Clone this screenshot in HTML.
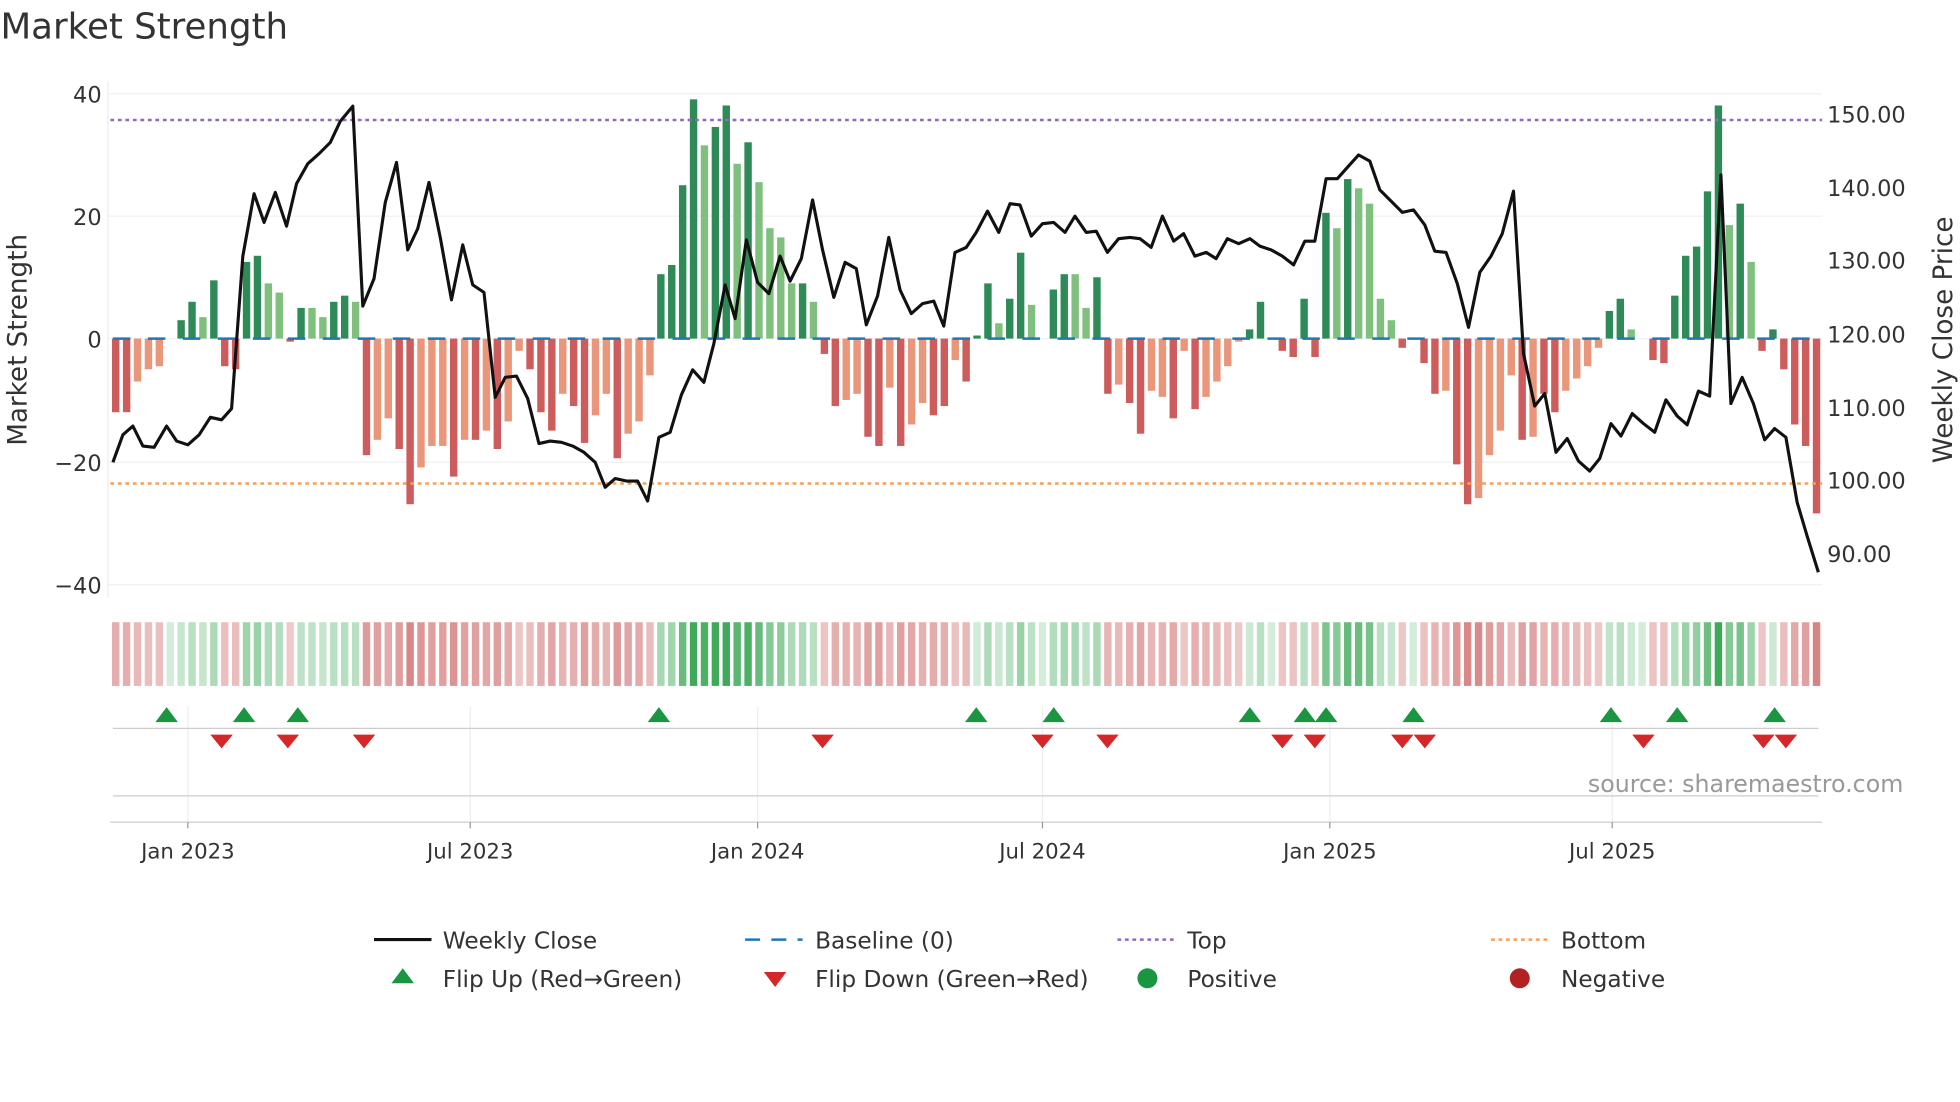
<!DOCTYPE html>
<html><head><meta charset="utf-8"><style>
html,body{margin:0;padding:0;background:#fff;width:1960px;height:1102px;overflow:hidden}
svg{display:block}
text{font-family:"DejaVu Sans","Liberation Sans",sans-serif}
</style></head><body>
<svg id="s" width="1960" height="1102" viewBox="0 0 1568 882" xmlns="http://www.w3.org/2000/svg">
<rect width="1568" height="882" fill="#fff"/>
<text x="0" y="31" font-size="28.5" fill="#333">Market Strength</text>
<g id="grid"></g>
<g id="bars"></g>
<g id="heat"></g>
<g id="marks"></g>
<g id="lines"></g>
<text transform="translate(21,272) rotate(-90)" font-size="21" fill="#333" text-anchor="middle">Market Strength</text>
<text transform="translate(1562,272) rotate(-90)" font-size="21" fill="#333" text-anchor="middle">Weekly Close Price</text>
<text x="1523" y="634" font-size="19" fill="#999" text-anchor="end">source: sharemaestro.com</text>
<g font-size="18.6" fill="#333">
<line x1="299" y1="752" x2="345" y2="752" stroke="#111" stroke-width="2.5"/><text x="354" y="759">Weekly Close</text>
<line x1="596" y1="752" x2="642" y2="752" stroke="#1f77b4" stroke-width="2" stroke-dasharray="12,9"/><text x="652" y="759">Baseline (0)</text>
<line x1="894" y1="752" x2="940" y2="752" stroke="#9467bd" stroke-width="2" stroke-dasharray="3,3"/><text x="950" y="759">Top</text>
<line x1="1193" y1="752" x2="1239" y2="752" stroke="#f4a05a" stroke-width="2" stroke-dasharray="3,3"/><text x="1249" y="759">Bottom</text>
<polygon points="313,787 331,787 322,775" fill="#1a9641"/><text x="354" y="790">Flip Up (Red→Green)</text>
<polygon points="611,778 629,778 620,790" fill="#d62728"/><text x="652" y="790">Flip Down (Green→Red)</text>
<circle cx="918" cy="783" r="8" fill="#1a9641"/><text x="950" y="790">Positive</text>
<circle cx="1216" cy="783" r="8" fill="#b22222"/><text x="1249" y="790">Negative</text>
</g>
</svg>
<script>
var NS="http://www.w3.org/2000/svg";
function el(p,t,a,txt){var e=document.createElementNS(NS,t);for(var k in a)e.setAttribute(k,a[k]);if(txt!==undefined)e.textContent=txt;document.getElementById(p).appendChild(e);return e;}
[75,173,271,370,468].forEach(function(y){el("grid","line",{x1:86,x2:1458,y1:y,y2:y,stroke:"#eef0f3","stroke-width":1});});
el("grid","line",{x1:86,x2:86,y1:65,y2:478,stroke:"#eee"});
[[75,"40"],[173,"20"],[271,"0"],[370,"−20"],[468,"−40"]].forEach(function(a){el("grid","text",{x:81,y:a[0]+7,"font-size":18,fill:"#333","text-anchor":"end"},a[1]);});
[[91,"150.00"],[150,"140.00"],[208,"130.00"],[267,"120.00"],[326,"110.00"],[384,"100.00"],[443,"90.00"]].forEach(function(a){el("grid","text",{x:1462,y:a[0]+7,"font-size":18,fill:"#333"},a[1]);});
[150,376,606,834,1064,1290].forEach(function(x){el("grid","line",{x1:x,x2:x,y1:565,y2:658,stroke:"#eee"});});
el("grid","line",{x1:90,x2:1455,y1:583,y2:583,stroke:"#ccc"});
el("grid","line",{x1:90,x2:1455,y1:637,y2:637,stroke:"#ccc"});
el("grid","line",{x1:88,x2:1458,y1:658,y2:658,stroke:"#ccc"});
[[150,"Jan 2023"],[376,"Jul 2023"],[606,"Jan 2024"],[834,"Jul 2024"],[1064,"Jan 2025"],[1290,"Jul 2025"]].forEach(function(a){el("grid","line",{x1:a[0],x2:a[0],y1:658,y2:663,stroke:"#999"});el("grid","text",{x:a[0],y:687,"font-size":17,fill:"#333","text-anchor":"middle"},a[1]);});
var d="-12D -12D -7L -5L -4.5L 0L 3D 6D 3.5L 9.5D -4.5D -5D 12.5D 13.5D 9L 7.5L -0.5D 5D 5L 3.5L 6D 7D 6L -19D -16.5L -13L -18D -27D -21L -17.5L -17.5L -22.5D -16.5L -16.5D -15L -18D -13.5L -2L -5D -12D -15D -9L -11D -17D -12.5L -9L -19.5D -15.5L -13.5L -6L 10.5D 12D 25D 39D 31.5L 34.5D 38D 28.5L 32D 25.5L 18L 16.5L 9L 9D 6L "+
"-2.5D -11D -10L -9L -16D -17.5D -8L -17.5D -14L -10.5L -12.5D -11D -3.5L -7D "+
"0.5D 9D 2.5L 6.5D 14D 5.5L 0L 8D 10.5D 10.5L 5L 10D -9D -7.5L -10.5D -15.5D -8.5L -9.5L -13D -2L -11.5D -9.5L -7L -4.5L -0.5L 1.5D 6D 0L -2D -3D 6.5D -3D "+
"20.5D 18L 26D 24.5L 22L 6.5L 3L -1.5D 0L -4D -9D -8.5L -20.5D -27D -26L -19L -15L -6L -16.5D -16L -9D -12D -8.5L -6.5L -4.5L -1.5L 4.5D 6.5D 1.5L 0L -3.5D -4D 7D 13.5D 15D 24D 38D 18.5L 22D 12.5L -2D 1.5D -5D -14D -17.5D -28.5D";
var arr=d.trim().split(/\s+/);
var step=1370/arr.length;
arr.forEach(function(s,i){
 var v=parseFloat(s),t=s.slice(-1),x=88+i*step+1.3,w=step-2.8;
 var col=v>=0?(t=="D"?"#2e8b57":"#7fc07f"):(t=="D"?"#cd5c5c":"#e9967a");
 if(v!=0){var y0=271,y1=271-v*4.91;el("bars","rect",{x:x,y:Math.min(y0,y1),width:w,height:Math.abs(y1-y0),fill:col});}
 var m=Math.min(1,Math.abs(v)/35);
 var hc=v>=0?"rgba(40,160,70,"+(0.2+0.7*m)+")":"rgba(200,80,80,"+(0.3+0.5*m)+")";
 el("heat","rect",{x:x,y:498,width:w,height:51,fill:hc});
});
el("lines","line",{x1:90,x2:1456,y1:271,y2:271,stroke:"#1f77b4","stroke-width":2,"stroke-dasharray":"14,14"});
el("lines","line",{x1:88,x2:1458,y1:96,y2:96,stroke:"#9467bd","stroke-width":2,"stroke-dasharray":"3,3"});
el("lines","line",{x1:88,x2:1458,y1:387,y2:387,stroke:"#f4a05a","stroke-width":2,"stroke-dasharray":"3,3"});
var pts="90,370 98,348 106,341 114,357 123,358 133,341 141,353 150,356 159,348 168,334 177,336 185,327 194,205 203,155 211,178 220,154 229,181 237,147 246,131 255,123 264,114 272,97 282,85 290,245 299,223 308,162 317,130 326,200 334,183 343,146 352,190 361,240 370,196 378,228 387,234 396,318 404,302 413,301 422,319 431,355 440,353 449,354 458,357 467,362 476,370 484,390 492,383 501,385 510,385 518,401 527,350 536,346 545,316 554,296 563,306 571,275 580,228 588,255 597,192 606,226 615,235 624,205 632,225 641,207 650,160 658,200 667,238 676,210 685,215 693,260 702,237 711,190 720,232 729,251 738,243 747,241 755,261 764,202 773,198 781,186 790,169 799,186 808,163 816,164 825,189 834,179 843,178 852,186 860,173 869,186 877,185 886,202 895,191 904,190 912,191 921,198 930,173 939,193 947,187 956,205 965,202 973,207 982,191 991,195 1000,191 1008,197 1017,200 1026,205 1035,212 1044,193 1052,193 1061,143 1070,143 1078,134 1087,124 1096,129 1104,152 1113,161 1122,170 1131,168 1140,180 1148,201 1157,202 1166,227 1175,262 1184,218 1193,205 1202,187 1211,153 1219,283 1228,325 1236,315 1245,362 1254,351 1263,369 1272,377 1280,367 1289,339 1297,349 1306,331 1315,339 1324,346 1333,320 1342,333 1350,340 1359,313 1368,317 1377,140 1385,323 1394,302 1403,323 1412,352 1420,343 1429,350 1438,402 1446,429 1455,458";
el("lines","polyline",{points:pts,fill:"none",stroke:"#111","stroke-width":2.5,"stroke-linejoin":"round"});
[133,195,238,527,781,843,1000,1044,1061,1131,1289,1342,1420].forEach(function(x){el("marks","polygon",{points:(x-9)+",578 "+(x+9)+",578 "+x+",566",fill:"#1a9641"});});
[177,230,291,658,834,886,1026,1052,1122,1140,1315,1411,1429].forEach(function(x){el("marks","polygon",{points:(x-9)+",588 "+(x+9)+",588 "+x+",599",fill:"#d62728"});});
</script>
</body></html>
